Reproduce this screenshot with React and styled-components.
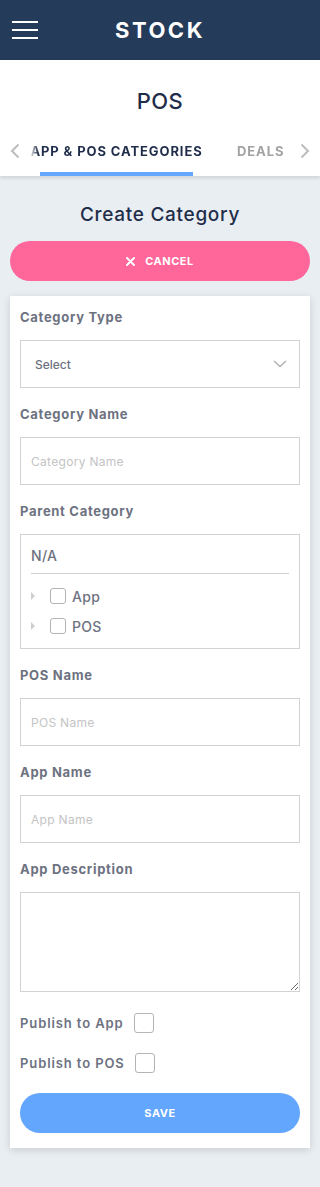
import React from 'react'
import styled, { createGlobalStyle } from 'styled-components'

const colors = {
  navy: '#243b5a',
  ink: '#1f2d4a',
  label: '#6d7281',
  line: '#d2d2d2',
  page: '#e9eef3',
  pink: '#ff6699',
  blue: '#62a6fe',
  muted: '#a3a3a3',
  placeholder: '#c4c4c4',
}

const GlobalStyle = createGlobalStyle`
  body {
    margin: 0;
    background: ${colors.page};
    font-family: Inter, 'Open Sans', sans-serif;
  }
  * { box-sizing: border-box; }
`

const Chevron = ({ dir }) => (
  <svg width='10' height='16' viewBox='0 0 10 16'>
    <polyline
      points={dir === 'left' ? '8.5,1.5 2,8 8.5,14.5' : '1.5,1.5 8,8 1.5,14.5'}
      fill='none'
      stroke='#bdbdbd'
      strokeWidth='2'
    />
  </svg>
)

const App = () => {
  return (
    <>
      <GlobalStyle />
      <Header>
        <Burger>
          <span />
          <span />
          <span />
        </Burger>
        <Brand>STOCK</Brand>
        <div />
      </Header>

      <SubHeader>
        <PageTitle>POS</PageTitle>
        <TabBar>
          <Arrow>
            <Chevron dir='left' />
          </Arrow>
          <TabStrip>
            <Tab active>APP &amp; POS CATEGORIES</Tab>
            <Tab>DEALS</Tab>
          </TabStrip>
          <Arrow>
            <Chevron dir='right' />
          </Arrow>
        </TabBar>
      </SubHeader>

      <Main>
        <Heading>Create Category</Heading>
        <PillButton color={colors.pink}>
          <svg width='9' height='9' viewBox='0 0 9 9'>
            <path d='M1 1L8 8M8 1L1 8' stroke='#fff' strokeWidth='2' strokeLinecap='round' />
          </svg>
          CANCEL
        </PillButton>

        <Card>
          <Field>
            <Label>Category Type</Label>
            <SelectBox>
              <span>Select</span>
              <svg width='14' height='8' viewBox='0 0 14 8'>
                <polyline points='1,1 7,6.5 13,1' fill='none' stroke='#b0b0b0' strokeWidth='1.4' />
              </svg>
            </SelectBox>
          </Field>

          <Field>
            <Label>Category Name</Label>
            <TextInput placeholder='Category Name' />
          </Field>

          <Field>
            <Label>Parent Category</Label>
            <TreeBox>
              <TreeRoot>N/A</TreeRoot>
              <TreeList>
                {['App', 'POS'].map((name) => (
                  <TreeRow key={name}>
                    <Caret />
                    <Check size={16} />
                    <TreeName>{name}</TreeName>
                  </TreeRow>
                ))}
              </TreeList>
            </TreeBox>
          </Field>

          <Field>
            <Label>POS Name</Label>
            <TextInput placeholder='POS Name' />
          </Field>

          <Field>
            <Label>App Name</Label>
            <TextInput placeholder='App Name' />
          </Field>

          <Field>
            <Label>App Description</Label>
            <TextArea />
          </Field>

          <PublishList>
            <PublishRow>
              <span>Publish to App</span>
              <Check size={20} />
            </PublishRow>
            <PublishRow>
              <span>Publish to POS</span>
              <Check size={20} />
            </PublishRow>
          </PublishList>

          <PillButton color={colors.blue} style={{ marginTop: 20 }}>
            SAVE
          </PillButton>
        </Card>
      </Main>
    </>
  )
}

const Header = styled.header`
  height: 60px;
  background: ${colors.navy};
  display: grid;
  grid-template-columns: 1fr auto 1fr;
  align-items: center;
`

const Burger = styled.div`
  display: flex;
  flex-direction: column;
  gap: 6px;
  padding-left: 12px;

  span {
    display: block;
    width: 26px;
    height: 2px;
    background: #fff;
  }
`

const Brand = styled.div`
  color: #fff;
  font-weight: 700;
  font-size: 22px;
  letter-spacing: 2.5px;
`

const SubHeader = styled.div`
  background: #fff;
  box-shadow: 0 2px 4px rgba(0, 0, 0, 0.12);
`

const PageTitle = styled.h1`
  margin: 0;
  padding: 26px 0 14px;
  text-align: center;
  font-size: 22px;
  line-height: 30px;
  font-weight: 500;
  letter-spacing: 0.5px;
  color: ${colors.ink};
`

const TabBar = styled.div`
  display: flex;
  align-items: stretch;
  height: 46px;
`

const Arrow = styled.div`
  width: 30px;
  display: flex;
  align-items: center;
  justify-content: center;
  padding-bottom: 4px;
`

const TabStrip = styled.div`
  flex: 1;
  display: flex;
  overflow: hidden;
  -webkit-mask-image: linear-gradient(to right, transparent 0, #000 8px);
`

const Tab = styled.div`
  flex: none;
  display: flex;
  justify-content: center;
  white-space: nowrap;
  padding-top: 12px;
  width: ${(p) => (p.active ? '153px' : 'auto')};
  margin-left: ${(p) => (p.active ? '10px' : '44px')};
  font-size: 13px;
  line-height: 18px;
  font-weight: 700;
  letter-spacing: 0.9px;
  color: ${(p) => (p.active ? colors.ink : colors.muted)};
  border-bottom: 4px solid ${(p) => (p.active ? colors.blue : 'transparent')};
`

const Main = styled.main`
  padding: 27px 10px 40px;
`

const Heading = styled.h2`
  margin: 0 0 14px;
  text-align: center;
  font-size: 19px;
  line-height: 24px;
  font-weight: 500;
  letter-spacing: 0.7px;
  color: ${colors.ink};
`

const PillButton = styled.button`
  width: 100%;
  height: 40px;
  border: none;
  border-radius: 20px;
  background: ${(p) => p.color};
  color: #fff;
  font-family: inherit;
  font-size: 11px;
  font-weight: 700;
  letter-spacing: 0.5px;
  display: flex;
  align-items: center;
  justify-content: center;
  gap: 10px;
`

const Card = styled.section`
  margin-top: 15px;
  background: #fff;
  box-shadow: 0 2px 8px rgba(0, 0, 0, 0.14);
  padding: 10px 10px 15px;
`

const Field = styled.div`
  margin-bottom: 15px;
`

const Label = styled.div`
  font-size: 13px;
  line-height: 22px;
  font-weight: 700;
  letter-spacing: 0.7px;
  color: ${colors.label};
  margin-bottom: 12px;
`

const boxBase = `
  display: block;
  width: 100%;
  height: 48px;
  border: 1px solid ${colors.line};
  background: #fff;
  font-family: inherit;
`

const SelectBox = styled.div`
  ${boxBase}
  display: flex;
  align-items: center;
  justify-content: space-between;
  padding: 0 12px 0 14px;
  font-size: 12px;
  font-weight: 500;
  color: ${colors.label};
`

const TextInput = styled.input`
  ${boxBase}
  padding: 0 10px;
  font-size: 12px;
  letter-spacing: 0.3px;
  outline: none;

  &::placeholder {
    color: ${colors.placeholder};
  }
`

const TextArea = styled.textarea`
  ${boxBase}
  height: 100px;
  padding: 10px;
  resize: both;
  vertical-align: top;
`

const TreeBox = styled.div`
  border: 1px solid ${colors.line};
  height: 115px;
  padding: 11px 10px 0;
`

const TreeRoot = styled.div`
  font-size: 14px;
  line-height: 20px;
  font-weight: 500;
  letter-spacing: 0.3px;
  color: ${colors.label};
  padding-bottom: 7px;
  border-bottom: 1px solid ${colors.line};
`

const TreeList = styled.div`
  padding-top: 7px;
`

const TreeRow = styled.div`
  height: 30px;
  display: flex;
  align-items: center;
`

const TreeName = styled.span`
  margin-left: 6px;
  font-size: 14px;
  font-weight: 500;
  letter-spacing: 0.3px;
  color: ${colors.label};
`

const Caret = styled.i`
  width: 0;
  height: 0;
  border-top: 4px solid transparent;
  border-bottom: 4px solid transparent;
  border-left: 4px solid #cfcfcf;
  margin-right: 15px;
`

const Check = styled.span`
  flex: none;
  width: ${(p) => p.size}px;
  height: ${(p) => p.size}px;
  border: 1px solid #b4b4b4;
  border-radius: 3px;
  background: #fff;
`

const PublishList = styled.div`
  margin-top: 21px;
  display: flex;
  flex-direction: column;
  gap: 20px;
`

const PublishRow = styled.label`
  height: 20px;
  display: flex;
  align-items: center;
  gap: 10px;
  font-size: 13px;
  font-weight: 600;
  letter-spacing: 0.9px;
  color: ${colors.label};
`

export default App
